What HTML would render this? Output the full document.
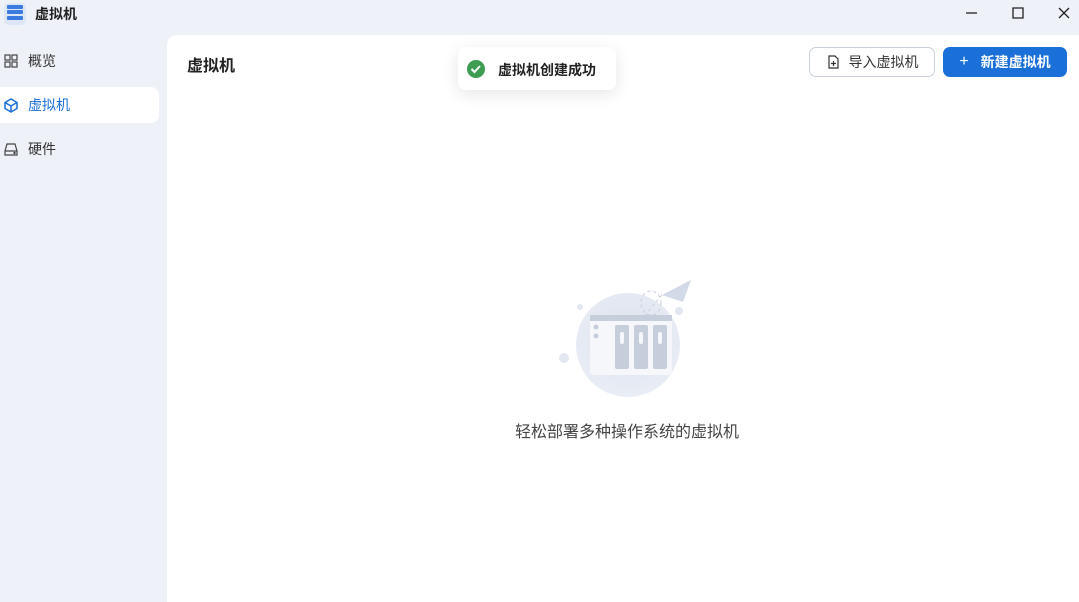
<!DOCTYPE html>
<html><head><meta charset="utf-8"><style>
*{margin:0;padding:0;box-sizing:border-box}
body{width:1079px;height:602px;background:#eef1f8;font-family:"Liberation Sans","Noto Sans CJK SC",sans-serif;position:relative;overflow:hidden;color:#222}
.abs{position:absolute}
.nav{position:absolute;left:0;width:159px;height:36px;display:flex;align-items:center;font-size:14px;color:#333}
.nav svg{margin:0 10px 0 4px}
.main{position:absolute;left:167px;top:35px;width:912px;height:567px;background:#fff;border-top-left-radius:10px}
.btn{position:absolute;top:47px;height:30px;border-radius:7px;font-size:14px;display:flex;align-items:center;justify-content:center}
</style></head><body>
<div class="abs" style="left:4px;top:3px;width:22px;height:22px;border-radius:5px;background:#dde6f6"></div>
<div class="abs" style="left:7px;top:5px;width:16px;height:4px;background:#3b7be0;border-radius:1px"></div>
<div class="abs" style="left:7px;top:10px;width:16px;height:4px;background:#3b7be0;border-radius:1px"></div>
<div class="abs" style="left:7px;top:16px;width:16px;height:4px;background:#3b7be0;border-radius:1px"></div>
<div class="abs" style="left:35px;top:4px;font-size:14px;font-weight:bold">虚拟机</div>
<svg class="abs" style="left:960px;top:4px" width="110" height="18" stroke="#222" stroke-width="1.3" fill="none"><path d="M6 9h11"/><path d="M53 4h10v10h-10z"/><path d="M99 4l10 10M109 4l-10 10"/></svg>
<div class="nav" style="top:43px"><svg width="14" height="14" fill="none" stroke="#444" stroke-width="1.2"><rect x="1" y="1" width="5" height="5"/><rect x="8" y="1" width="5" height="5"/><rect x="1" y="8" width="5" height="5"/><rect x="8" y="8" width="5" height="5"/></svg>概览</div>
<div class="nav" style="top:87px;background:#fff;border-radius:0 8px 8px 0;color:#1a6fd8"><svg width="14" height="15" fill="none" stroke="#1a6fd8" stroke-width="1.5"><path d="M7 1l6 3.5v6L7 14 1 10.5v-6z M1 4.5L7 8l6-3.5M7 8v6"/></svg>虚拟机</div>
<div class="nav" style="top:131px"><svg width="14" height="14" fill="none" stroke="#444" stroke-width="1.2"><path d="M3 2h8l2 7v4H1V9z M1 9h12"/><circle cx="10.5" cy="11" r=".6" fill="#444"/></svg>硬件</div>
<div class="main"></div>
<div class="abs" style="left:187px;top:52px;font-size:16px;font-weight:bold">虚拟机</div>
<div class="btn" style="left:809px;width:126px;border:1px solid #c9d0da;color:#333;background:#fff"><svg width="14" height="14" fill="none" stroke="#333" stroke-width="1.2" style="margin-right:9px"><path d="M3 1h6l3 3v9H3z M7.5 6v5M5 8.5h5"/></svg>导入虚拟机</div>
<div class="btn" style="left:943px;width:124px;background:#1a6fd8;color:#fff;font-weight:bold"><span style="margin-right:12px;font-size:16px;font-weight:normal">+</span>新建虚拟机</div>
<div class="abs" style="left:458px;top:47px;width:158px;height:43px;background:#fff;border-radius:7px;box-shadow:0 4px 16px rgba(0,0,0,.1)"></div>
<svg class="abs" style="left:466px;top:59px" width="20" height="20"><circle cx="10" cy="10" r="9" fill="#3e9d52"/><path d="M5.5 10l3 3 5.5-6" stroke="#fff" stroke-width="2" fill="none"/></svg>
<div class="abs" style="left:498px;top:60px;font-size:14px;color:#222;font-weight:bold">虚拟机创建成功</div>
<svg class="abs" style="left:550px;top:275px" width="150" height="125">
<defs><radialGradient id="g" cx=".5" cy=".4" r=".6"><stop offset="0" stop-color="#dce2ee"/><stop offset="1" stop-color="#e9edf5"/></radialGradient></defs>
<circle cx="78" cy="70" r="52" fill="url(#g)"/>
<circle cx="30" cy="32" r="3" fill="#e2e7f0"/><circle cx="14" cy="83" r="5" fill="#e2e7f0"/><circle cx="129" cy="36" r="4" fill="#e2e7f0"/>
<path d="M112 20l29-15-8 22z" fill="#d3dae7"/>
<path d="M112 20l-25 30" stroke="#c7cfdd" stroke-dasharray="3 3" fill="none"/>
<ellipse cx="101" cy="28" rx="10" ry="12" stroke="#c7cfdd" stroke-dasharray="3 3" fill="none"/>
<rect x="40" y="40" width="82" height="60" rx="4" fill="#f5f7fa"/>
<rect x="40" y="40" width="82" height="6" fill="#c6cddb"/>
<circle cx="46" cy="52" r="2.5" fill="#c6cddb"/><circle cx="46" cy="61" r="2.5" fill="#c6cddb"/>
<rect x="65" y="50" width="14" height="44" rx="2" fill="#c6cddb"/><rect x="84" y="50" width="14" height="44" rx="2" fill="#c6cddb"/><rect x="103" y="50" width="14" height="44" rx="2" fill="#c6cddb"/>
<rect x="70" y="57" width="4" height="12" rx="2" fill="#f5f7fa"/><rect x="89" y="57" width="4" height="12" rx="2" fill="#f5f7fa"/><rect x="108" y="57" width="4" height="12" rx="2" fill="#f5f7fa"/>
</svg>
<div class="abs" style="left:515px;top:418px;font-size:16px;color:#444">轻松部署多种操作系统的虚拟机</div>
</body></html>
